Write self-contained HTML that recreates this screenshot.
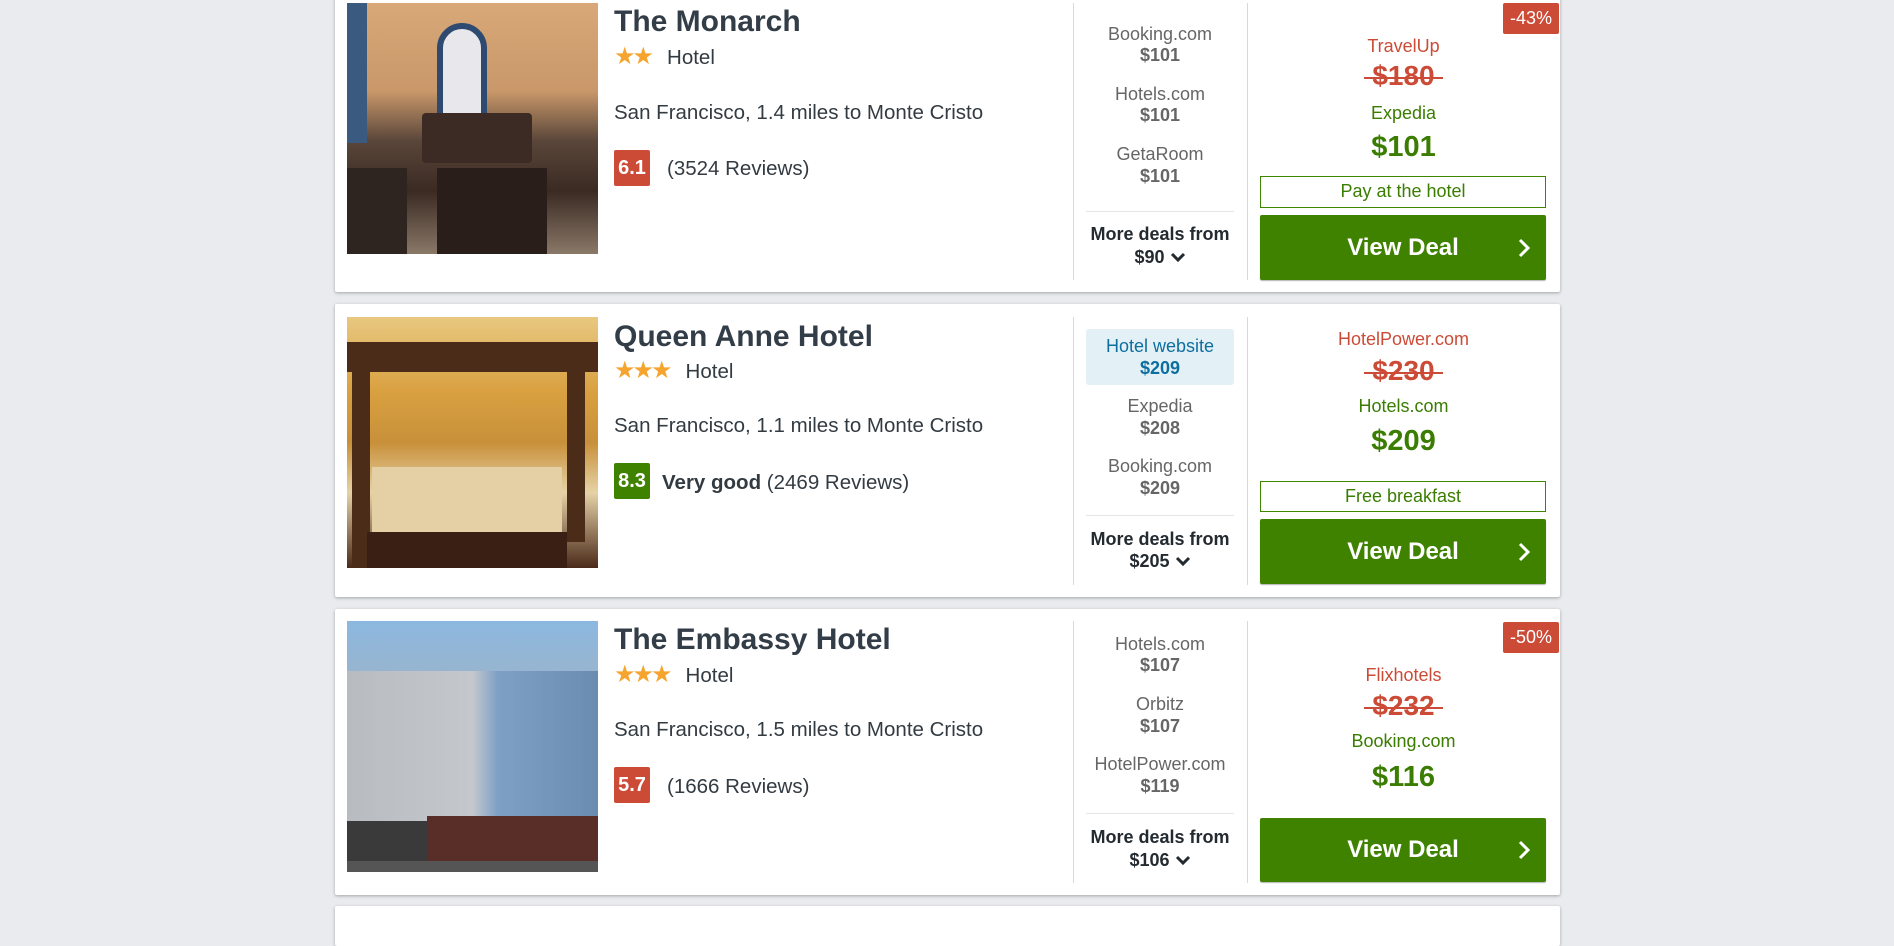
<!DOCTYPE html>
<html><head><meta charset="utf-8">
<style>
*{margin:0;padding:0;box-sizing:border-box}
html,body{width:1894px;height:910px}
body{background:#e9ebee;font-family:"Liberation Sans",Arial,sans-serif;position:relative;overflow:hidden;color:#333b42}
.card{position:absolute;left:335px;width:1225px;background:#fff;box-shadow:0 1px 3px rgba(0,0,0,.3);border-radius:2px}
.a{position:absolute;white-space:nowrap;line-height:24px}
.mid{left:1073px;width:174px;text-align:center;font-size:18px;color:#666}
.midp{font-weight:bold}
.rt{left:1247px;width:313px;text-align:center}
.title{left:614px;font-size:30px;font-weight:bold;line-height:36px;color:#323d47}
.sub{left:614px;font-size:20.5px}
.stars{color:#f5a52f;font-size:24px;letter-spacing:-3px}
.badge{position:absolute;left:614px;width:36px;height:36px;color:#fff;font-weight:bold;font-size:20px;line-height:36px;text-align:center;border-radius:2px}
.vl{position:absolute;width:1px;background:#d8d8d8}
.hl{position:absolute;left:1086px;width:148px;height:1px;background:#e6e6e6}
.red{color:#cc4b37;font-size:18px}
.grn{color:#3a7d00;font-size:18px}
.strike{font-size:28px;font-weight:bold;color:#cc4b37;line-height:32px}
.strike span{position:relative;padding:0 8px}
.strike span:after{content:"";position:absolute;left:0;right:0;top:17px;height:2px;background:#cc4b37}
.big{font-size:29px;font-weight:bold;color:#3a7d00;line-height:32px}
.lbl{position:absolute;left:1260px;width:286px;border:1.5px solid #3f8500;color:#3a7d00;font-size:18px;text-align:center}
.btn{position:absolute;left:1260px;width:286px;background:#3f8200;border-radius:2px;color:#fff;font-weight:bold;font-size:24px;text-align:center;box-shadow:0 1px 1px rgba(0,0,0,.3)}
.btn svg{position:absolute;right:16px;top:50%;margin-top:-10px}
.disc{position:absolute;left:1503px;width:56px;height:31px;background:#cc4b37;color:#fff;font-size:18px;line-height:31px;text-align:center;border-radius:2px}
.more{color:#232a30;font-weight:bold}
.img{position:absolute;left:347px;width:251px;height:251px;overflow:hidden}
</style></head><body>

<div class="card" style="top:-9px;height:301px"></div>
<div class="card" style="top:304px;height:293px"></div>
<div class="card" style="top:609px;height:286px"></div>
<div class="card" style="top:906px;height:40px"></div>

<!-- images -->
<div class="img" style="top:3px;background:linear-gradient(180deg,#d8a878 0%,#c9986a 35%,#5a463a 55%,#3a2a22 75%,#8a7868 100%)">
 <div style="position:absolute;left:90px;top:20px;width:50px;height:100px;background:#e8e8ec;border-radius:25px 25px 0 0;border:6px solid #2e4a70"></div>
 <div style="position:absolute;left:0;top:0;width:20px;height:140px;background:#3a5a80"></div>
 <div style="position:absolute;left:75px;top:110px;width:110px;height:50px;background:#3c2a24;border-radius:4px"></div>
 <div style="position:absolute;left:90px;top:165px;width:110px;height:86px;background:#2a1e1a"></div>
 <div style="position:absolute;left:0;top:165px;width:60px;height:86px;background:#2e2420"></div>
</div>
<div class="img" style="top:317px;background:linear-gradient(180deg,#e8c880 0%,#d9a040 30%,#c8903a 50%,#e6d2a6 70%,#4a2a1a 100%)">
 <div style="position:absolute;left:0;top:25px;width:251px;height:30px;background:#4a2c18"></div>
 <div style="position:absolute;left:5px;top:25px;width:18px;height:226px;background:#4a2c18"></div>
 <div style="position:absolute;left:220px;top:25px;width:18px;height:200px;background:#4a2c18"></div>
 <div style="position:absolute;left:25px;top:150px;width:190px;height:70px;background:#e4d0a4"></div>
 <div style="position:absolute;left:20px;top:215px;width:200px;height:36px;background:#3a2014"></div>
</div>
<div class="img" style="top:621px;background:linear-gradient(180deg,#8cb8e0 0%,#9ab4cc 25%,#a8aeb4 50%,#8a929a 75%,#4a3a36 100%)">
 <div style="position:absolute;left:0;top:50px;width:251px;height:150px;background:linear-gradient(90deg,#b8bcc0 0%,#c4c8cc 50%,#7ea0c4 60%,#6a8cb0 100%)"></div>
 <div style="position:absolute;left:80px;top:195px;width:171px;height:50px;background:#5a2e28"></div>
 <div style="position:absolute;left:0;top:200px;width:80px;height:45px;background:#3a3a3a"></div>
 <div style="position:absolute;left:0;top:240px;width:251px;height:11px;background:#555"></div>
</div>

<!-- card 1 left -->
<div class="a title" style="top:4px">The Monarch</div>
<div class="a sub" style="top:45px"><span class="stars">★★</span><span style="margin-left:16px">Hotel</span></div>
<div class="a sub" style="top:101px">San Francisco, 1.4 miles to Monte Cristo</div>
<div class="badge" style="top:150px;background:#cc4b37">6.1</div>
<div class="a sub" style="top:157px;left:667px">(3524 Reviews)</div>

<!-- card 2 left -->
<div class="a title" style="top:319px">Queen Anne Hotel</div>
<div class="a sub" style="top:359px"><span class="stars">★★★</span><span style="margin-left:16px">Hotel</span></div>
<div class="a sub" style="top:414px">San Francisco, 1.1 miles to Monte Cristo</div>
<div class="badge" style="top:463px;background:#3f8200">8.3</div>
<div class="a sub" style="top:471px;left:662px"><b>Very good</b> (2469 Reviews)</div>

<!-- card 3 left -->
<div class="a title" style="top:622px">The Embassy Hotel</div>
<div class="a sub" style="top:663px"><span class="stars">★★★</span><span style="margin-left:16px">Hotel</span></div>
<div class="a sub" style="top:718px">San Francisco, 1.5 miles to Monte Cristo</div>
<div class="badge" style="top:767px;background:#cc4b37">5.7</div>
<div class="a sub" style="top:775px;left:667px">(1666 Reviews)</div>

<!-- dividers -->
<div class="vl" style="left:1073px;top:3px;height:277px"></div>
<div class="vl" style="left:1247px;top:3px;height:277px"></div>
<div class="vl" style="left:1073px;top:317px;height:268px"></div>
<div class="vl" style="left:1247px;top:317px;height:268px"></div>
<div class="vl" style="left:1073px;top:621px;height:262px"></div>
<div class="vl" style="left:1247px;top:621px;height:262px"></div>

<!-- card 1 mid -->
<div class="a mid" style="top:22px">Booking.com</div>
<div class="a mid midp" style="top:43px">$101</div>
<div class="a mid" style="top:82px">Hotels.com</div>
<div class="a mid midp" style="top:103px">$101</div>
<div class="a mid" style="top:142px">GetaRoom</div>
<div class="a mid midp" style="top:164px">$101</div>
<div class="hl" style="top:211px"></div>
<div class="a mid more" style="top:222px">More deals from</div>
<div class="a mid more" style="top:245px">$90 <svg width="16" height="11" viewBox="0 0 16 11"><path d="M2 2l6 6 6-6" stroke="#232a30" stroke-width="3" fill="none"/></svg></div>

<!-- card 2 mid -->
<div style="position:absolute;left:1086px;top:329px;width:148px;height:56px;background:#e3f0f5;border-radius:3px"></div>
<div class="a mid" style="top:334px;color:#0d6fa0">Hotel website</div>
<div class="a mid midp" style="top:356px;color:#0d6fa0">$209</div>
<div class="a mid" style="top:394px">Expedia</div>
<div class="a mid midp" style="top:416px">$208</div>
<div class="a mid" style="top:454px">Booking.com</div>
<div class="a mid midp" style="top:476px">$209</div>
<div class="hl" style="top:515px"></div>
<div class="a mid more" style="top:527px">More deals from</div>
<div class="a mid more" style="top:549px">$205 <svg width="16" height="11" viewBox="0 0 16 11"><path d="M2 2l6 6 6-6" stroke="#232a30" stroke-width="3" fill="none"/></svg></div>

<!-- card 3 mid -->
<div class="a mid" style="top:632px">Hotels.com</div>
<div class="a mid midp" style="top:653px">$107</div>
<div class="a mid" style="top:692px">Orbitz</div>
<div class="a mid midp" style="top:714px">$107</div>
<div class="a mid" style="top:752px">HotelPower.com</div>
<div class="a mid midp" style="top:774px">$119</div>
<div class="hl" style="top:813px"></div>
<div class="a mid more" style="top:825px">More deals from</div>
<div class="a mid more" style="top:848px">$106 <svg width="16" height="11" viewBox="0 0 16 11"><path d="M2 2l6 6 6-6" stroke="#232a30" stroke-width="3" fill="none"/></svg></div>

<!-- card 1 right -->
<div class="disc" style="top:3px">-43%</div>
<div class="a rt red" style="top:34px">TravelUp</div>
<div class="a rt strike" style="top:60px"><span>$180</span></div>
<div class="a rt grn" style="top:101px">Expedia</div>
<div class="a rt big" style="top:131px">$101</div>
<div class="lbl" style="top:176px;height:32px;line-height:29px">Pay at the hotel</div>
<div class="btn" style="top:215px;height:65px;line-height:65px">View Deal<svg width="12" height="20" viewBox="0 0 12 20"><path d="M2 2l8 8-8 8" stroke="#fff" stroke-width="3" fill="none"/></svg></div>

<!-- card 2 right -->
<div class="a rt red" style="top:327px">HotelPower.com</div>
<div class="a rt strike" style="top:355px"><span>$230</span></div>
<div class="a rt grn" style="top:394px">Hotels.com</div>
<div class="a rt big" style="top:425px">$209</div>
<div class="lbl" style="top:481px;height:31px;line-height:28px">Free breakfast</div>
<div class="btn" style="top:519px;height:65px;line-height:65px">View Deal<svg width="12" height="20" viewBox="0 0 12 20"><path d="M2 2l8 8-8 8" stroke="#fff" stroke-width="3" fill="none"/></svg></div>

<!-- card 3 right -->
<div class="disc" style="top:622px">-50%</div>
<div class="a rt red" style="top:663px">Flixhotels</div>
<div class="a rt strike" style="top:690px"><span>$232</span></div>
<div class="a rt grn" style="top:729px">Booking.com</div>
<div class="a rt big" style="top:761px">$116</div>
<div class="btn" style="top:818px;height:64px;line-height:64px">View Deal<svg width="12" height="20" viewBox="0 0 12 20"><path d="M2 2l8 8-8 8" stroke="#fff" stroke-width="3" fill="none"/></svg></div>

</body></html>
